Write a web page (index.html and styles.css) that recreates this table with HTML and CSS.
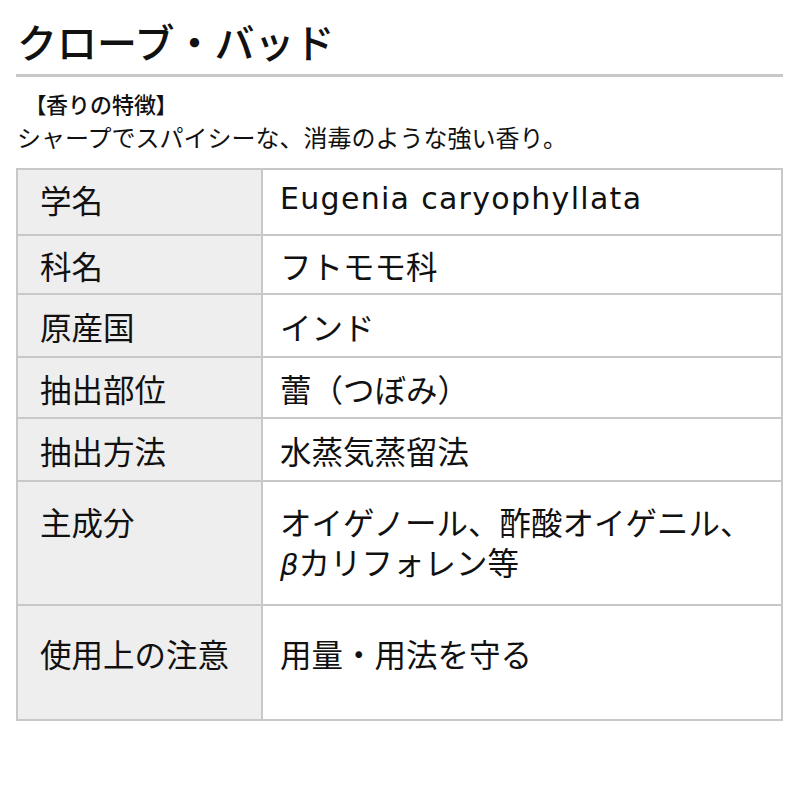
FILE: index.html
```html
<!DOCTYPE html>
<html lang="ja">
<head>
<meta charset="utf-8">
<title>クローブ・バッド</title>
<link rel="stylesheet" href="styles.css">
</head>
<body>
<div class="page">
  <h1 class="title">クローブ・バッド</h1>
  <p class="feature-head"><span class="br">【</span>香りの特徴<span class="br">】</span></p>
  <p class="feature-text">シャープでスパイシーな、消毒のような強い香り。</p>
  <div class="spec">
    <div class="row r1">
      <div class="label">学名</div>
      <div class="value"><span class="latin">Eugenia caryophyllata</span></div>
    </div>
    <div class="row r2">
      <div class="label">科名</div>
      <div class="value">フトモモ科</div>
    </div>
    <div class="row r3">
      <div class="label">原産国</div>
      <div class="value">インド</div>
    </div>
    <div class="row r4">
      <div class="label">抽出部位</div>
      <div class="value">蕾（つぼみ）</div>
    </div>
    <div class="row r5">
      <div class="label">抽出方法</div>
      <div class="value">水蒸気蒸留法</div>
    </div>
    <div class="row r6">
      <div class="label top">主成分</div>
      <div class="value"><p class="lines">オイゲノール、酢酸オイゲニル、<br><span class="greek">β</span>カリフォレン等</p></div>
    </div>
    <div class="row r7">
      <div class="label">使用上の注意</div>
      <div class="value">用量・用法を守る</div>
    </div>
  </div>
</div>
</body>
</html>
```

FILE: styles.css
```css
html, body {
  margin: 0;
  padding: 0;
  background: #ffffff;
}

body {
  font-family: "Noto Sans CJK JP", "Noto Sans", sans-serif;
  color: #111111;
}

.page {
  width: 767px;
  margin-left: 16px;
  padding-top: 17px;
}

.title {
  margin: 0;
  font-size: 40px;
  line-height: 48px;
  font-weight: 500;
  padding-left: 1px;
  padding-bottom: 9px;
  border-bottom: 3px solid #c8c8c8;
}

.feature-head {
  margin: 10px 0 0 0;
  font-size: 22px;
  line-height: 32px;
  font-weight: 500;
  padding-left: 19px;
}

.br {
  font-feature-settings: "palt";
}

.feature-text {
  margin: 2px 0 0 0;
  font-size: 24px;
  line-height: 32px;
  padding-left: 1px;
}

.spec {
  margin-top: 15px;
  border: 2px solid #c8c8c8;
  font-size: 31.5px;
  line-height: 40px;
}

.row {
  display: grid;
  grid-template-columns: 245px 1fr;
  border-top: 2px solid #c8c8c8;
}

.row:first-child {
  border-top: none;
}

.r1 { height: 64px; }
.r2 { height: 57px; }
.r3 { height: 61px; }
.r4 { height: 59px; }
.r5 { height: 61px; }
.r6 { height: 122px; }
.r7 { height: 113px; }

.label {
  background: #eeeeee;
  border-right: 2px solid #c8c8c8;
  padding-left: 22px;
  display: flex;
  align-items: center;
}

.label.top {
  align-items: flex-start;
  padding-top: 19px;
}

.value {
  padding-left: 17px;
  display: flex;
  align-items: center;
}

.r1 .label, .r1 .value {
  padding-bottom: 6px;
}

.r7 .label, .r7 .value {
  padding-bottom: 20px;
}

.lines {
  margin: 0;
}

.latin {
  font-family: "DejaVu Sans", "Noto Sans", sans-serif;
  letter-spacing: 1.3px;
  font-size: 30px;
}

.greek {
  font-family: "DejaVu Sans", sans-serif;
  font-style: italic;
  font-size: 29px;
}
```
